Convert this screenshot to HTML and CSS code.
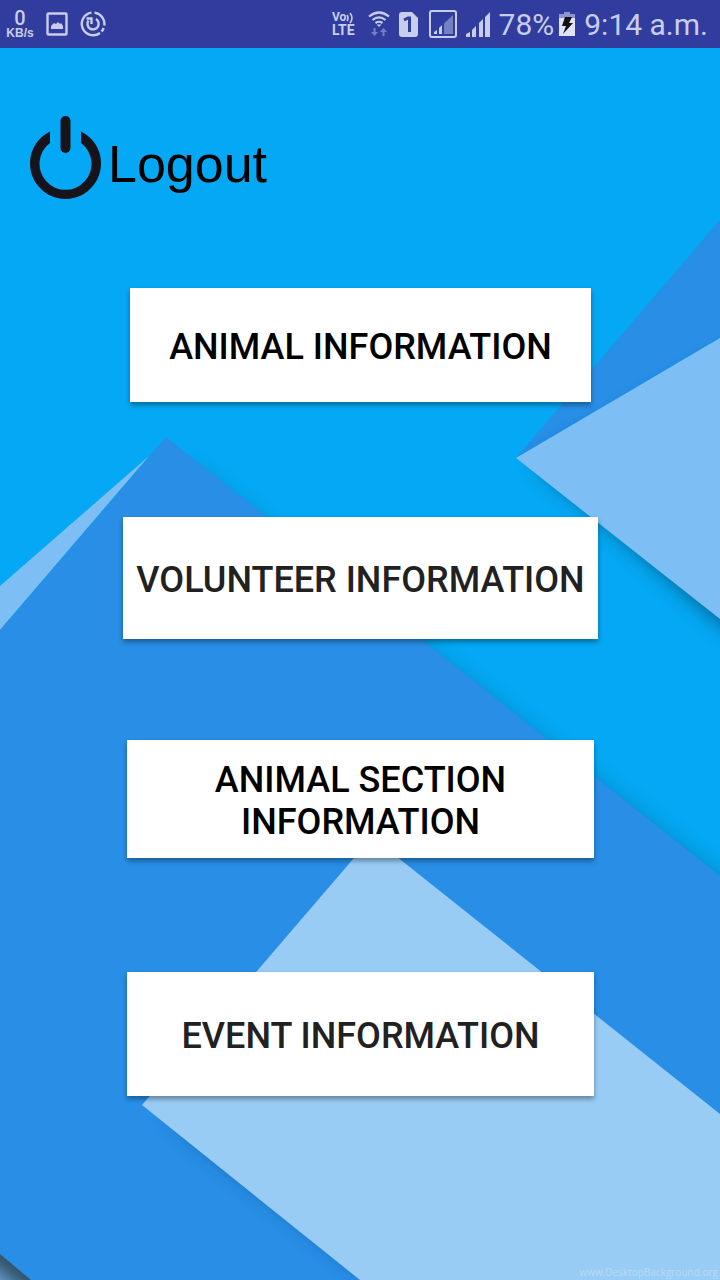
FILE: index.html
```html
<!DOCTYPE html>
<html lang="en">
<head>
<meta charset="utf-8">
<meta name="viewport" content="width=device-width, initial-scale=1">
<title>Information menu</title>
<link rel="stylesheet" href="styles.css">
</head>
<body>
<div class="screen">
  <svg class="wallpaper" viewBox="0 0 720 1280" preserveAspectRatio="xMidYMid slice" aria-hidden="true">
    <defs>
      <filter id="soft" x="-20%" y="-20%" width="140%" height="140%"><feGaussianBlur stdDeviation="10"/></filter>
      <clipPath id="corner"><path d="M0 1254L31 1280H0z"/></clipPath>
    </defs>
    <rect width="720" height="1280" fill="#05a8f4"/>
    <path d="M720 220L516 458L720 338z" fill="#288ee6"/>
    <path d="M535 464L740 348V640z" fill="#003c58" opacity=".65" filter="url(#soft)"/>
    <path d="M516 458L720 338V619z" fill="#7dbff5"/>
    <path d="M0 586L149 456L0 630z" fill="#7dbff5"/>
    <path d="M186 462L740 890V960L182 550z" fill="#004a70" opacity=".32" filter="url(#soft)"/>
    <path d="M166 437L720 876V1280H0V630z" fill="#288ee6"/>
    <path d="M200 1143L400 1300H500L300 1120L165 1107z" fill="#003468" opacity=".6" filter="url(#soft)"/>
    <path d="M372 837L720 1114V1280H360L142 1105z" fill="#99ccf5"/>
    <g clip-path="url(#corner)">
      <path d="M0 1254L31 1280H0z" fill="#6ba3d3"/>
      <path d="M-30 1229L61 1305" fill="none" stroke="#243d50" stroke-width="22" filter="url(#soft)"/>
    </g>
  </svg>

  <header class="status">
    <div class="status-group status-left">
      <div class="rate"><span class="rate-value">0</span><span class="rate-unit">KB/s</span></div>
      <svg class="ico-picture" width="22" height="24" viewBox="0 0 22 24"><rect x="1.5" y="1.5" width="19" height="21" rx="1" fill="none" stroke="currentColor" stroke-width="2.4"/><path d="M5 17v-3l3-3 2 1 2-2 2 2 1-1 2 3v3z" fill="currentColor"/></svg>
      <svg class="ico-sync" width="26" height="26" viewBox="0 0 26 26" fill="none" stroke="currentColor" stroke-width="2.4"><path d="M14.500 1.600A11.400 11.400 0 0 1 24.300 14.500M23.700 17A11.400 11.400 0 0 1 21.500 20.500M20 22A11.400 11.400 0 1 1 11.500 1.600"/><path d="M16 8A5.600 5.600 0 1 1 8.500 9.500"/><path d="M6.500 7.500H11.500V13"/></svg>
    </div>
    <div class="status-group status-right">
      <div class="volte"><span class="vo">Vo<svg width="8" height="12" viewBox="0 0 8 12" fill="none" stroke="currentColor" stroke-width="1.6"><path d="M1 3q2 3 0 6M4 1q4 5 0 10"/></svg></span><span>LTE</span></div>
      <svg class="ico-wifi" width="22" height="26" viewBox="0 0 22 26"><g fill="none" stroke="currentColor" stroke-width="2.2"><path d="M1 5.500Q11-2.500 21 5.500M4.500 9Q11 3.800 17.500 9M7.500 12Q11 9.500 14.500 12"/></g><path d="M8.500 13.500h5L11 16z" fill="currentColor"/><path d="M5.500 17h2v4h2.500L6.500 25 3 21h2.500zM14.500 25h2v-4H19l-3.500-4-3.500 4h2.500z" fill="#7480c4"/></svg>
      <svg class="ico-sim" width="19" height="25" viewBox="0 0 19 25"><path d="M3 0H13L19 6V22Q19 25 16 25H3Q0 25 0 22V3Q0 0 3 0z" fill="currentColor"/><path d="M5 8L9 6H10.500V20" fill="none" stroke="#303d9e" stroke-width="3"/></svg>
      <svg class="ico-signal-box" width="28" height="28" viewBox="0 0 28 28"><rect x="1" y="1" width="26" height="26" rx="2" fill="none" stroke="currentColor" stroke-width="2"/><path d="M15 13.500L24 5V24H15z" fill="#7480c4"/><path d="M5 22L8 20V24H5zM10 18L13 15V24H10z" fill="currentColor"/></svg>
      <svg class="ico-signal" width="24" height="25" viewBox="0 0 24 25" fill="currentColor"><path d="M0 22l4-2v5H0zM6 18l4-4v11H6zM13 11l4-4v18h-4zM19 5l5-5v25h-5z"/></svg>
      <span class="percent">78%</span>
      <svg class="ico-battery" width="16" height="24" viewBox="0 0 16 24"><path d="M0 2H5V0H11V2H16V8H0z" fill="#8d94d0"/><path d="M0 6H16V24H0z" fill="#e0e2f5"/><path d="M6 5h7l-3 6h4L4 22l3-8H3z" fill="#111"/></svg>
      <span class="clock">9:14 a.m.</span>
    </div>
  </header>

  <main class="content">
    <button class="logout" type="button">
      <svg width="72" height="86" viewBox="0 0 72 86" fill="none" stroke="#17131a" stroke-width="10"><path d="M35.500 6V33" stroke-linecap="round"/><path d="M20 16.500V28A26 26 0 1 0 51 28V16.500A35.500 35.500 0 1 1 20 16.500z" fill="#17131a" stroke="none"/></svg>
      <span>Logout</span>
    </button>
    <nav class="menu" aria-label="Information">
      <button class="card animal" type="button">ANIMAL INFORMATION</button>
      <button class="card volunteer" type="button">VOLUNTEER INFORMATION</button>
      <button class="card section" type="button">ANIMAL SECTION INFORMATION</button>
      <button class="card event" type="button">EVENT INFORMATION</button>
    </nav>
  </main>
  <footer class="credit">www.DesktopBackground.org</footer>
</div>
</body>
</html>
```
FILE: styles.css
```css
* { box-sizing: border-box; }
body { margin: 0; font-family: Roboto, "Liberation Sans", sans-serif; background: #288ee6; }
button { border: 0; font: inherit; cursor: pointer; }
svg { display: block; flex: none; }

.screen { position: relative; isolation: isolate; display: flex; flex-direction: column; min-height: 100vh; overflow: hidden; }
.wallpaper { position: absolute; inset: 0; z-index: -1; width: 100%; height: 100%; }

.status { display: flex; justify-content: space-between; height: 48px; padding: 0 12px 0 6px; background: #303d9e; color: #c9cdec; }
.status-group { display: flex; align-items: center; }
.status-left { gap: 12px; }
.status-right { gap: 9px; }
.rate { display: flex; flex-direction: column; align-items: center; width: 28px; }
.rate-value { font-size: 20px; line-height: 19px; font-weight: 500; }
.rate-unit { font: bold 12px/11px "Liberation Sans", Arial, sans-serif; }
.volte { display: flex; flex-direction: column; font-size: 14px; line-height: 13px; font-weight: 700; margin-right: 4px; }
.vo { display: flex; align-items: center; font-size: 12px; }
.ico-signal-box { margin-left: 2px; }
.percent, .clock { padding-top: 2px; font-size: 30px; line-height: 46px; white-space: nowrap; }
.percent { margin-right: -4px; }

.content { padding: 67px 0 0; }
.logout { display: flex; align-items: center; gap: 6px; margin-left: 30px; padding: 0; background: none; color: #000; font: 52px/60px "Liberation Sans", Arial, sans-serif; }
.logout span { padding-top: 12px; }

.menu { display: flex; flex-direction: column; align-items: center; padding: 87px 0 0 1px; }
.card { padding: 4px 12px 0; background: #fff; color: #212121; font-size: 36px; line-height: 42px; font-weight: 500; box-shadow: 0 3px 5px rgba(0, 0, 0, .36); }
.animal { width: 64%; min-height: 114px; margin-bottom: 115px; color: #000; }
.volunteer { width: 66%; min-height: 122px; margin-bottom: 101px; }
.section { width: 65%; min-height: 118px; margin-bottom: 114px; padding-inline: 80px; color: #000; }
.event { width: 65%; min-height: 124px; }

.credit { margin-top: auto; padding-right: 2px; text-align: right; font: 10px/16px "Open Sans", sans-serif; color: #b5dafa; }
```
